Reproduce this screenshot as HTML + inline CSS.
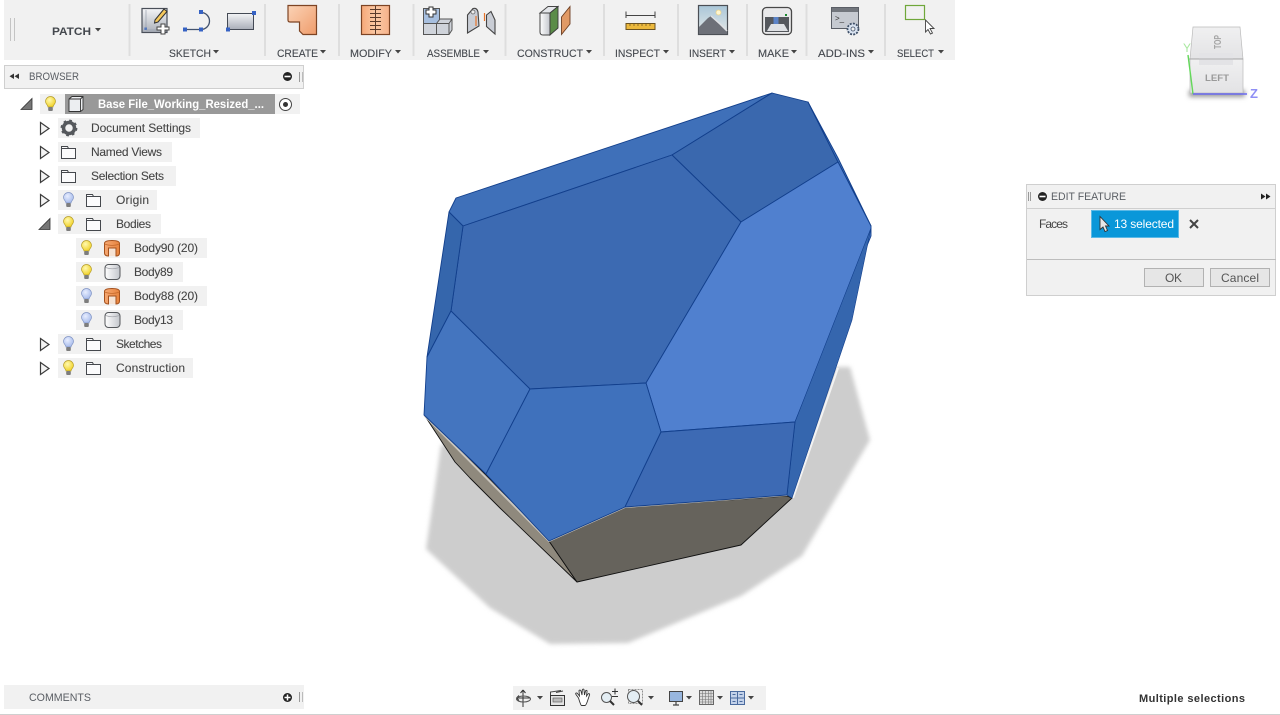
<!DOCTYPE html>
<html lang="en">
<head>
<meta charset="utf-8">
<title>Patch - Edit Feature</title>
<style>
html,body{margin:0;padding:0;background:#fff;width:1280px;height:715px;overflow:hidden}
svg{display:block;position:absolute;left:0;top:0}
text{font-family:"Liberation Sans",sans-serif;font-size:11px;fill:#4a4a4a}
.tb{fill:#44484e;font-size:11px;stroke:#44484e;stroke-width:.12}
.tree{fill:#444;font-size:12px;stroke:#444;stroke-width:.08}
</style>
</head>
<body>
<svg width="1280" height="715" viewBox="0 0 1280 715" xmlns="http://www.w3.org/2000/svg">
<defs>
<linearGradient id="gy" x1="0" y1="0" x2="0" y2="1"><stop offset="0" stop-color="#f4f5f7"/><stop offset="1" stop-color="#a9aeb8"/></linearGradient>
<linearGradient id="gy2" x1="0" y1="0" x2="1" y2="0"><stop offset="0" stop-color="#fff"/><stop offset="1" stop-color="#c3c6cc"/></linearGradient>
<linearGradient id="or" x1="0" y1="0" x2="1" y2="1"><stop offset="0" stop-color="#fbd3b6"/><stop offset="1" stop-color="#ef9c6b"/></linearGradient>
<linearGradient id="or2" x1="0" y1="0" x2="1" y2="0"><stop offset="0" stop-color="#f6a878"/><stop offset=".5" stop-color="#fbc9a5"/><stop offset="1" stop-color="#f6b28a"/></linearGradient>
<linearGradient id="or3" x1="0" y1="0" x2="1" y2="0"><stop offset="0" stop-color="#f5a873"/><stop offset="1" stop-color="#e8843e"/></linearGradient>
<linearGradient id="sky" x1="0" y1="0" x2="0" y2="1"><stop offset="0" stop-color="#a9c6d8"/><stop offset="1" stop-color="#e6e9e8"/></linearGradient>
<linearGradient id="cube" x1="0" y1="0" x2="0" y2="1"><stop offset="0" stop-color="#f0f0f1"/><stop offset="1" stop-color="#e3e3e5"/></linearGradient>
<radialGradient id="yb" cx=".4" cy=".35" r=".7"><stop offset="0" stop-color="#fff9b0"/><stop offset="1" stop-color="#f0cf1e"/></radialGradient>
<radialGradient id="bb" cx=".4" cy=".35" r=".7"><stop offset="0" stop-color="#e8eeff"/><stop offset="1" stop-color="#a3b8ea"/></radialGradient>
<filter id="blur" x="-5%" y="-5%" width="110%" height="110%"><feGaussianBlur stdDeviation="2"/></filter>
<filter id="blur2" x="-30%" y="-100%" width="160%" height="300%"><feGaussianBlur stdDeviation="2.5"/></filter>

<g id="bulbY"><path d="M-2.5 3C-2.500 1-5 0-5-2.500A5 5 0 0 1 5-2.500C5 0 2.500 1 2.500 3Z" fill="url(#yb)" stroke="#b59c28" stroke-width=".7"/><rect x="-2.300" y="3" width="4.600" height="4" rx="1" fill="#7d7d7d"/></g>
<g id="bulbB"><path d="M-2.5 3C-2.500 1-5 0-5-2.500A5 5 0 0 1 5-2.500C5 0 2.500 1 2.500 3Z" fill="url(#bb)" stroke="#7f93c4" stroke-width=".7"/><rect x="-2.300" y="3" width="4.600" height="4" rx="1" fill="#7d7d7d"/></g>
<path id="folder" d="M.5 1.500H6.500L7.500 3.500H14.500V13.500H.5Z M.5 3.500H7.500" fill="#fbfbfc" stroke="#45484d" stroke-width="1"/>
<path id="tri" d="M.5.5L9 6.500L.5 12.500Z" fill="#f4f4f4" stroke="#3c3c3c" stroke-width="1.200"/>
<path id="triD" d="M0 11L11 0V11Z" fill="#777" stroke="#333" stroke-width=".8"/>
<path id="dn" d="M0 0H6L3 3.500Z" fill="#444"/>
<g id="bodyO"><path d="M1 3.500Q1 .5 8.500 .5T16 3.500V13Q16 16 12.500 16V8H5V16Q1 16 1 13Z" fill="url(#or3)" stroke="#a4501c" stroke-width="1"/><path d="M1 4Q8.500 7 16 4" fill="none" stroke="#c56a2c" stroke-width=".8"/><rect x="5.500" y="8.500" width="6.500" height="7.500" fill="#f6e3d4"/></g>
<g id="bodyG"><rect x="1" y=".5" width="15" height="15" rx="3.500" fill="url(#gy2)" stroke="#55585c" stroke-width="1"/><path d="M1.500 3.500Q8 6 15.500 3.500" fill="none" stroke="#a8aab0" stroke-width=".8"/></g>
</defs>

<!-- shadow -->
<polygon points="850,367 870,440 802,556 741,596 628,643 550,644 490,608 426,549 441,445 600,430 838,367" fill="#cdcdcd" filter="url(#blur)"/>

<!-- body -->
<g stroke="#123f8c" stroke-width=".9" stroke-linejoin="round">
<polygon points="425,416 485,474 549,541 577,582 500,508 470,478 455,462" fill="#8f897d" stroke="#111"/>
<polygon points="549,541 625,507 787,496 792,498 741,545 577,582" fill="#66635c" stroke="#111"/>
<polyline points="425,416 549,541 625,507 787,495" fill="none" stroke="#c9c6bf" stroke-width="2"/>
<polyline points="838,368 793,498" fill="none" stroke="#f2f2f2" stroke-width="2"/>
<polygon points="449,212 456,198 772,93 672,155 463,226" fill="#3f70b9"/>
<polygon points="672,155 772,93 808,102 838,162 741,222" fill="#3a68ae"/>
<polygon points="808,102 838,158 871,226 838,162" fill="#4273bb"/>
<polygon points="463,226 672,155 741,222 646,383 530,389 451,311" fill="#3c6ab2"/>
<polygon points="741,222 838,162 871,226 871,236 795,422 661,432 646,383" fill="#5080cf"/>
<polygon points="871,228 852,320 792,498 787,495 795,422" fill="#3566ae" stroke-width=".6"/>
<polygon points="449,212 463,226 451,311 427,357" fill="#3566ac"/>
<polygon points="451,311 530,389 486,474 424,415 427,357" fill="#4475bf"/>
<polygon points="530,389 646,383 661,432 625,507 549,541 486,474" fill="#3f71bc"/>
<polygon points="661,432 795,422 787,495 625,507" fill="#3d6ab4"/>
</g>

<!-- top toolbar -->
<rect x="4" y="0" width="951" height="60" fill="#f1f1f1"/>
<g fill="#dedede">
<rect x="128.500" y="4" width="2" height="52"/><rect x="264" y="4" width="2" height="52"/><rect x="338" y="4" width="2" height="52"/><rect x="412.500" y="4" width="2" height="52"/><rect x="504.500" y="4" width="2" height="52"/><rect x="603" y="4" width="2" height="52"/><rect x="677" y="4" width="2" height="52"/><rect x="746" y="4" width="2" height="52"/><rect x="805.500" y="4" width="2" height="52"/><rect x="884" y="4" width="2" height="52"/>
</g>
<rect x="10" y="18" width="1" height="23" fill="#c4c4c4"/><rect x="14" y="18" width="1" height="23" fill="#c4c4c4"/>
<text x="52" y="35" textLength="39" lengthAdjust="spacingAndGlyphs" style="font-weight:bold;fill:#44484e">PATCH</text><use href="#dn" x="95" y="28"/>

<!-- sketch icons -->
<rect x="142" y="8.500" width="25" height="24" fill="url(#gy)" stroke="#4a4f59" stroke-width="1.200"/>
<rect x="144.500" y="27.500" width="2.500" height="2.500" fill="#3d6cc6"/>
<path d="M146 30H162M146 10V30" stroke="#8a93a3" stroke-width=".6" fill="none"/>
<path d="M155 20L164 9L167 11.500L158 22L154.500 23Z" fill="#f5c85c" stroke="#333" stroke-width="1"/>
<path d="M161 25H165V28H169V31H165V35H161V31H157V28H161Z" fill="#fff" stroke="#444" stroke-width="1" transform="translate(0,-1)"/>
<path d="M185 29.500H201A8.500 8.500 0 0 0 201 12.500" fill="none" stroke="#42526e" stroke-width="1.300"/>
<g fill="#3662c4"><rect x="183" y="27.500" width="4" height="4"/><rect x="199" y="27.500" width="4" height="4"/><rect x="199" y="10" width="4" height="4"/></g>
<rect x="227.500" y="13.500" width="26" height="16" fill="url(#gy)" stroke="#444a55" stroke-width="1"/>
<rect x="252" y="11" width="4" height="4" fill="#3662c4"/><rect x="226" y="27.500" width="4" height="4" fill="#3662c4"/>

<!-- create -->
<path d="M288 5.500H316.500V34.500H303L299.500 31V22H290Q288 22 288 20Z" fill="url(#or)" stroke="#7d4424" stroke-width="1.200"/>

<!-- modify -->
<rect x="361.500" y="5.500" width="28" height="29" fill="url(#or2)" stroke="#7d4424" stroke-width="1.200"/>
<path d="M375.500 6V34M370 9.500H381M370 13.500H381M370 17.500H381M370 21.500H381M370 25.500H381M370 29.500H381" stroke="#5a3a2a" stroke-width="1" fill="none"/>

<!-- assemble -->
<rect x="423.500" y="8.500" width="16" height="15" fill="#a7bfdf" stroke="#555" stroke-width="1"/>
<rect x="423.500" y="23.500" width="13" height="11" fill="#d0d4db" stroke="#555" stroke-width="1"/>
<path d="M436.500 23.500L440 19H452V30L449 34.500H436.500ZM436.500 23.500H449V34.500M449 23.500L452 19" fill="#cfd3da" stroke="#555" stroke-width="1"/>
<path d="M426 10H429V7H433V10H436V14H433V17H429V14H426Z" fill="#fff" stroke="#333" stroke-width="1"/>
<path d="M467.500 15L473 8.500Q477 7.500 478 12L479 26L467.500 33Z" fill="#c9cdd5" stroke="#444" stroke-width="1.100"/>
<path d="M486.500 15L491 11.500L495 20V34L486.500 26.500Z" fill="#c9cdd5" stroke="#444" stroke-width="1.100"/>
<path d="M476 16V26M484.500 13V21" stroke="#e8742a" stroke-width="1.200" fill="none"/>
<circle cx="473" cy="12" r="2" fill="#eee" stroke="#555" stroke-width=".7"/>

<!-- construct -->
<path d="M540 13L548 6.500H558L550 13Z" fill="#e4e6ea" stroke="#454545" stroke-width=".9"/>
<path d="M540 13H550V35H543Q540 35 540 32Z" fill="url(#gy2)" stroke="#454545" stroke-width="1"/>
<path d="M550 13L558 6.500V28L550 35Z" fill="#5a8c48" stroke="#3a3a3a" stroke-width=".9"/>
<path d="M561.500 17L570 6.500V24L561.500 34.500Z" fill="#e19a66" stroke="#6d3e22" stroke-width=".9"/>

<!-- inspect -->
<path d="M626 11.500V18M626 15.500H655M655 11.500V18" stroke="#444" stroke-width="1" fill="none"/>
<rect x="626" y="23.500" width="29" height="6" fill="#ecb93d" stroke="#6b5220" stroke-width="1"/>
<path d="M630 23.500V26M634 23.500V26M638 23.500V26M642 23.500V26M646 23.500V26M650 23.500V26" stroke="#6b5220" stroke-width=".7"/>

<!-- insert -->
<rect x="698.500" y="5.500" width="29" height="29" fill="url(#sky)" stroke="#4b4f55" stroke-width="1.200"/>
<circle cx="718.500" cy="12.500" r="2.500" fill="#fff6cf" stroke="#ecd38a" stroke-width=".7"/>
<path d="M699 27L708 18L711 16L717 22L727 31V34H699Z" fill="#6d7078"/>
<path d="M711 16L720 24L727 31" stroke="#dfe1e4" stroke-width="1.500" fill="none"/>

<!-- make -->
<rect x="762.500" y="7.500" width="29" height="27" rx="4" fill="#e9e9ea" stroke="#484848" stroke-width="1.300"/>
<rect x="765" y="17" width="24" height="15" fill="#55585d"/>
<rect x="773.500" y="17" width="5" height="7" fill="#5b83c7"/>
<path d="M767 31L771 24H784L788 31Z" fill="#dfe1e4"/>
<rect x="785" y="14" width="2" height="2" fill="#1a8a30"/>

<!-- addins -->
<rect x="831.500" y="7.500" width="27" height="21" fill="#c6cad1" stroke="#5a5e66" stroke-width="1"/>
<rect x="832" y="8" width="26" height="4" fill="#72767d"/>
<text x="835" y="21" style="font-size:8px;fill:#333">&gt;_</text>
<circle cx="853" cy="29" r="5.500" fill="#d8e2f0" stroke="#3f5068" stroke-width="1.800" stroke-dasharray="2 1.200"/>
<circle cx="853" cy="29" r="2" fill="#f1f1f1" stroke="#3f5068" stroke-width=".8"/>

<!-- select -->
<rect x="905.500" y="5.500" width="19" height="14" fill="#f1f1f1" stroke="#6fa73a" stroke-width="1.200"/>
<path d="M925.500 20V32L928 29.500L930.500 34L932.500 33L930 28.500H934Z" fill="#fff" stroke="#444" stroke-width=".9"/>

<!-- toolbar labels -->
<text class="tb" x="169" y="57" textLength="42" lengthAdjust="spacingAndGlyphs">SKETCH</text><use href="#dn" x="213" y="50"/>
<text class="tb" x="277" y="57" textLength="41" lengthAdjust="spacingAndGlyphs">CREATE</text><use href="#dn" x="320" y="50"/>
<text class="tb" x="350" y="57" textLength="42" lengthAdjust="spacingAndGlyphs">MODIFY</text><use href="#dn" x="395" y="50"/>
<text class="tb" x="427" y="57" textLength="53" lengthAdjust="spacingAndGlyphs">ASSEMBLE</text><use href="#dn" x="483" y="50"/>
<text class="tb" x="517" y="57" textLength="66" lengthAdjust="spacingAndGlyphs">CONSTRUCT</text><use href="#dn" x="586" y="50"/>
<text class="tb" x="615" y="57" textLength="45" lengthAdjust="spacingAndGlyphs">INSPECT</text><use href="#dn" x="663" y="50"/>
<text class="tb" x="689" y="57" textLength="37" lengthAdjust="spacingAndGlyphs">INSERT</text><use href="#dn" x="729" y="50"/>
<text class="tb" x="758" y="57" textLength="31" lengthAdjust="spacingAndGlyphs">MAKE</text><use href="#dn" x="791" y="50"/>
<text class="tb" x="818" y="57" textLength="47" lengthAdjust="spacingAndGlyphs">ADD-INS</text><use href="#dn" x="868" y="50"/>
<text class="tb" x="897" y="57" textLength="37" lengthAdjust="spacingAndGlyphs">SELECT</text><use href="#dn" x="938" y="50"/>

<!-- browser header -->
<rect x="4.500" y="65.500" width="299" height="23" fill="#f1f1f1" stroke="#cfcfcf"/>
<path d="M14 73.500V79L9.500 76.250ZM19 73.500V79L14.500 76.250Z" fill="#333"/>
<text x="29" y="80" textLength="50" lengthAdjust="spacingAndGlyphs" style="fill:#5a5e64">BROWSER</text>
<circle cx="287.500" cy="76.500" r="4.500" fill="#222"/><rect x="284.500" y="75.700" width="6" height="1.600" fill="#fff"/>
<rect x="299" y="72" width="1" height="10" fill="#999"/><rect x="302" y="72" width="1" height="10" fill="#bbb"/>

<!-- tree -->
<g fill="#f1f1f1">
<rect x="40" y="94" width="260" height="20"/>
<rect x="58" y="118" width="142" height="20"/>
<rect x="58" y="142" width="114" height="20"/>
<rect x="58" y="166" width="118" height="20"/>
<rect x="58" y="190" width="99" height="20"/>
<rect x="58" y="214" width="103" height="20"/>
<rect x="76" y="238" width="131" height="20"/>
<rect x="76" y="262" width="107" height="20"/>
<rect x="76" y="286" width="131" height="20"/>
<rect x="76" y="310" width="107" height="20"/>
<rect x="58" y="334" width="115" height="20"/>
<rect x="58" y="358" width="135" height="20"/>
</g>
<rect x="65" y="94" width="210" height="20" fill="#999"/>
<use href="#triD" x="21" y="98.500"/>
<use href="#bulbY" x="50.500" y="104"/>
<path d="M69 99L72 96.500H83V109.500L80.500 111.500H69ZM69 99H80.500V111.500M80.500 99L83 96.500" fill="#eceef1" stroke="#333" stroke-width=".9"/>
<text x="98" y="108" textLength="166" lengthAdjust="spacingAndGlyphs" style="font-weight:bold;font-size:11.500px;fill:#fff">Base File_Working_Resized_...</text>
<circle cx="285.500" cy="104.500" r="6" fill="#fff" stroke="#444" stroke-width="1"/><circle cx="285.500" cy="104.500" r="2.500" fill="#333"/>

<use href="#tri" x="40" y="122"/>
<g transform="translate(69 128)"><circle r="5.500" fill="none" stroke="#55585c" stroke-width="3.500"/><circle r="7.200" fill="none" stroke="#55585c" stroke-width="2.400" stroke-dasharray="2.600 3.050"/></g>
<text class="tree" x="91" y="132" textLength="100">Document Settings</text>

<use href="#tri" x="40" y="146"/><use href="#folder" x="61" y="145"/>
<text class="tree" x="91" y="156" textLength="71">Named Views</text>

<use href="#tri" x="40" y="170"/><use href="#folder" x="61" y="169"/>
<text class="tree" x="91" y="180" textLength="73">Selection Sets</text>

<use href="#tri" x="40" y="194"/><use href="#bulbB" x="68.500" y="200"/><use href="#folder" x="86" y="193"/>
<text class="tree" x="116" y="204" textLength="33">Origin</text>

<use href="#triD" x="39" y="218.500"/><use href="#bulbY" x="68.500" y="224"/><use href="#folder" x="86" y="217"/>
<text class="tree" x="116" y="228" textLength="35">Bodies</text>

<use href="#bulbY" x="86.500" y="248"/><use href="#bodyO" x="103.500" y="240"/>
<text class="tree" x="134" y="252" textLength="64">Body90 (20)</text>
<use href="#bulbY" x="86.500" y="272"/><use href="#bodyG" x="104" y="264"/>
<text class="tree" x="134" y="276" textLength="39">Body89</text>
<use href="#bulbB" x="86.500" y="296"/><use href="#bodyO" x="103.500" y="288"/>
<text class="tree" x="134" y="300" textLength="64">Body88 (20)</text>
<use href="#bulbB" x="86.500" y="320"/><use href="#bodyG" x="104" y="312"/>
<text class="tree" x="134" y="324" textLength="39">Body13</text>

<use href="#tri" x="40" y="338"/><use href="#bulbB" x="68.500" y="344"/><use href="#folder" x="86" y="337"/>
<text class="tree" x="116" y="348" textLength="46">Sketches</text>
<use href="#tri" x="40" y="362"/><use href="#bulbY" x="68.500" y="368"/><use href="#folder" x="86" y="361"/>
<text class="tree" x="116" y="372" textLength="69">Construction</text>

<!-- comments -->
<rect x="4" y="685" width="300" height="24" fill="#f1f1f1"/>
<text x="29" y="701" textLength="62" lengthAdjust="spacingAndGlyphs" style="fill:#5a5e64">COMMENTS</text>
<circle cx="287.500" cy="697.500" r="4.500" fill="#222"/><path d="M284.500 697.500H290.500M287.500 694.500V700.500" stroke="#fff" stroke-width="1.500"/>
<rect x="299" y="692" width="1" height="10" fill="#999"/><rect x="302" y="692" width="1" height="10" fill="#bbb"/>

<!-- bottom toolbar -->
<rect x="513" y="686" width="253" height="24" fill="#f1f1f1"/>
<path d="M523 690V707M516.500 698H530M523 690L520.500 693M523 690L525.500 693M516.500 698L519 695.500M516.500 698L519 700.500" stroke="#333" stroke-width="1" fill="none"/>
<ellipse cx="523.500" cy="699" rx="7" ry="3" fill="none" stroke="#555" stroke-width="1"/>
<use href="#dn" x="537" y="696"/>
<rect x="550.500" y="695.500" width="14" height="10" fill="#e4e4e4" stroke="#333" stroke-width="1"/>
<rect x="553" y="698" width="9" height="4" fill="#bbb" stroke="#555" stroke-width=".6"/>
<path d="M550.500 695V692L561 690.500M556 692.500L563 691" stroke="#444" stroke-width="1" fill="none"/>
<path d="M578.500 698L576 694.500C575 693 576.500 692.500 577.500 693.500L579.500 696L579 691C579 689.800 580.500 689.800 581 691L582 695L582.300 690C582.500 688.800 584 688.800 584 690L584.500 695L585.500 691C586 690 587.500 690.300 587 691.500L586.500 696L588 694C589 693 590 694 589.500 695L587.500 701C586.500 704 585.500 705.500 585 705.500H581.500C580.500 705 579.500 701 578.500 698Z" fill="#fff" stroke="#333" stroke-width=".9"/>
<circle cx="606.500" cy="697.500" r="5" fill="#e4eef4" stroke="#555" stroke-width="1"/>
<path d="M610 701L614 705" stroke="#333" stroke-width="2"/>
<path d="M612 691.500H618M615 688.500V694.500M612 696.500H618" stroke="#333" stroke-width="1"/>
<rect x="628.500" y="689.500" width="14" height="14" fill="none" stroke="#777" stroke-width=".8" stroke-dasharray="2 1"/>
<circle cx="633.500" cy="696.500" r="6" fill="#e4eef4" stroke="#555" stroke-width="1"/>
<path d="M638 701L642 705" stroke="#333" stroke-width="2"/>
<use href="#dn" x="648" y="696"/>
<rect x="669.500" y="691.500" width="13" height="10" fill="#98b6de" stroke="#444" stroke-width="1"/>
<path d="M673 705H679M676 702V705" stroke="#444" stroke-width="1.200"/>
<use href="#dn" x="686" y="696"/>
<rect x="699.500" y="690.500" width="14" height="14" fill="#ddd" stroke="#666" stroke-width="1"/>
<path d="M702.500 691V704M705.500 691V704M708.500 691V704M711 691V704M700 693.500H713M700 696.500H713M700 699.500H713M700 702H713" stroke="#777" stroke-width=".6"/>
<use href="#dn" x="717" y="696"/>
<rect x="730.500" y="691.500" width="14" height="13" fill="#c3d2ea" stroke="#4a6a9e" stroke-width="1"/>
<path d="M737.500 691.500V704.500M730.500 698H744.500" stroke="#4a6a9e" stroke-width="1"/>
<path d="M732.500 694.500H735.500M739.500 694.500H742.500M732.500 701.500H735.500M739.500 701.500H742.500" stroke="#4a6a9e" stroke-width="1"/>
<use href="#dn" x="748" y="696"/>

<text x="1139" y="702" textLength="106" style="font-weight:bold;fill:#333">Multiple selections</text>

<!-- bottom line -->
<rect x="0" y="714" width="1280" height="1" fill="#cfcfcf"/>

<!-- view cube -->
<rect x="1189" y="90" width="56" height="7" fill="#999" filter="url(#blur2)"/>
<path d="M1193 27H1240L1243 59H1190Z" fill="url(#cube)" stroke="#bbb" stroke-width=".7"/>
<rect x="1190" y="59" width="53" height="34" fill="url(#cube)" stroke="#bbb" stroke-width=".7"/>
<rect x="1199" y="53" width="34" height="12" fill="#e3e3e6"/>
<path d="M1189 59H1243" stroke="#9a9a9a" stroke-width=".8"/>
<text x="1205" y="81" textLength="24" lengthAdjust="spacingAndGlyphs" style="font-size:9px;font-weight:bold;fill:#9a9a9a">LEFT</text>
<text transform="translate(1221 49) rotate(-90)" textLength="14" lengthAdjust="spacingAndGlyphs" style="font-size:10px;font-weight:bold;fill:#a5a5a5">TOP</text>
<path d="M1188 55L1193 94" stroke="#63d85a" stroke-width="1.400"/>
<path d="M1193 94H1247" stroke="#6a6af0" stroke-width="1.500"/>
<text x="1183" y="52" style="font-size:12px;fill:#a9e8a0">Y</text>
<text x="1250" y="98" style="font-size:13px;font-weight:bold;fill:#8f8ff5">Z</text>

<!-- edit feature panel -->
<rect x="1026.500" y="184.500" width="249" height="111" fill="#f1f1f1" stroke="#cfcfcf"/>
<path d="M1027 208.500H1276" stroke="#cfcfcf"/>
<path d="M1027 259.500H1276" stroke="#bdbdbd"/>
<rect x="1028" y="192" width="1" height="9" fill="#999"/><rect x="1030" y="192" width="1" height="9" fill="#999"/>
<circle cx="1042.500" cy="196.500" r="4.500" fill="#222"/><rect x="1039.500" y="195.700" width="6" height="1.600" fill="#fff"/>
<text x="1051" y="200" textLength="75" lengthAdjust="spacingAndGlyphs" style="fill:#5a5e64">EDIT FEATURE</text>
<path d="M1261 193.500V199.500L1265.500 196.500ZM1266 193.500V199.500L1270.500 196.500Z" fill="#222"/>
<text x="1039" y="228" textLength="29" style="font-size:12px;fill:#444">Faces</text>
<rect x="1091.500" y="210.500" width="87" height="27" fill="#0a97d9" stroke="#5cb9e6"/>
<path d="M1100 216.500V229.500L1103 227L1105 231.500L1107.500 230.500L1105.500 226H1109Z" fill="#e8e8e8" stroke="#333" stroke-width=".9"/>
<text x="1114" y="228" textLength="60" style="font-size:12px;fill:#fff">13 selected</text>
<path d="M1190 220L1198 228M1198 220L1190 228" stroke="#444" stroke-width="2"/>
<rect x="1144.500" y="268.500" width="59" height="18" fill="#e6e6e6" stroke="#b2b2b2"/>
<text x="1165" y="282" textLength="17" style="font-size:12px;fill:#555">OK</text>
<rect x="1210.500" y="268.500" width="59" height="18" fill="#e6e6e6" stroke="#b2b2b2"/>
<text x="1221" y="282" textLength="38" style="font-size:12px;fill:#555">Cancel</text>
</svg>
</body>
</html>
